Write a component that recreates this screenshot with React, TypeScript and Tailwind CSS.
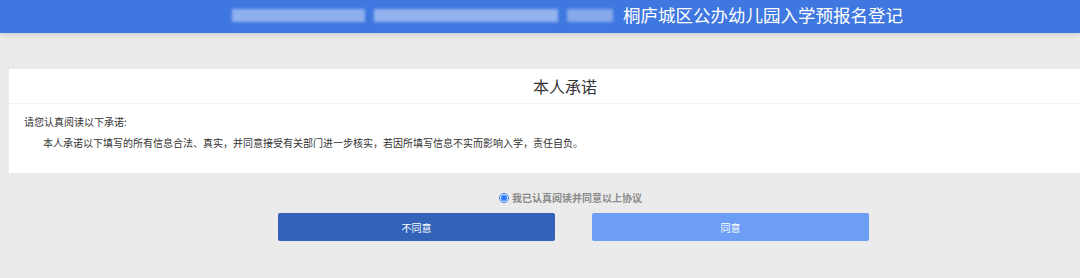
import React from 'react';

const CJK = "font-['Noto_Sans_CJK_SC','Noto_Sans',sans-serif]";

// Mosaic that hides the first part of the title, as in the screenshot
function Redacted({ width, tint }: { width: number; tint: string }) {
  return <span className={`inline-block h-[13px] blur-[1.5px] ${tint}`} style={{ width }} />;
}

export default function App() {
  return (
    <div className={`w-[1080px] h-[278px] overflow-hidden bg-[#ebebeb] ${CJK}`}>
      <header className="h-[33px] bg-[#3f77e0] shadow-[0_2px_6px_rgba(0,0,0,0.12)] flex items-center pb-[3px] pl-[232px]">
        <div className="flex items-center gap-[9px]">
          <Redacted width={133} tint="bg-[#8fb0ef]" />
          <Redacted width={184} tint="bg-[#93b3ef]" />
          <Redacted width={46} tint="bg-[#86a9ec]" />
        </div>
        <h1 className="ml-[10px] text-[17.5px] leading-none text-white">桐庐城区公办幼儿园入学预报名登记</h1>
      </header>

      <section className="mt-[36px] ml-[9px] bg-white">
        <h2 className="h-[35px] flex items-center justify-center pl-[41px] text-[16px] text-[#333] border-b border-[#f1f1f1]">
          本人承诺
        </h2>
        <div className="h-[69px] pt-[7px] pl-[15px] text-[10px] leading-[21px] text-[#333]">
          <p>请您认真阅读以下承诺:</p>
          <p className="pl-[19px]">
            本人承诺以下填写的所有信息合法、真实，并同意接受有关部门进一步核实，若因所填写信息不实而影响入学，责任自负。
          </p>
        </div>
      </section>

      <label className="mt-[17px] ml-[499px] flex items-center gap-[3px] text-[10px] font-bold text-[#8a8a8a]">
        <span className="w-[10px] h-[10px] rounded-full border border-[#2f7cf6] flex items-center justify-center">
          <span className="w-[6px] h-[6px] rounded-full bg-[#2f7cf6]" />
        </span>
        我已认真阅读并同意以上协议
      </label>

      <div className="mt-[8px] ml-[278px] flex gap-[37px]">
        <button className="w-[277px] h-[28px] rounded-[2px] bg-[#3362b9] text-white text-[10px]">不同意</button>
        <button className="w-[277px] h-[28px] rounded-[2px] bg-[#6c9ef5] text-white text-[10px]">同意</button>
      </div>
    </div>
  );
}
